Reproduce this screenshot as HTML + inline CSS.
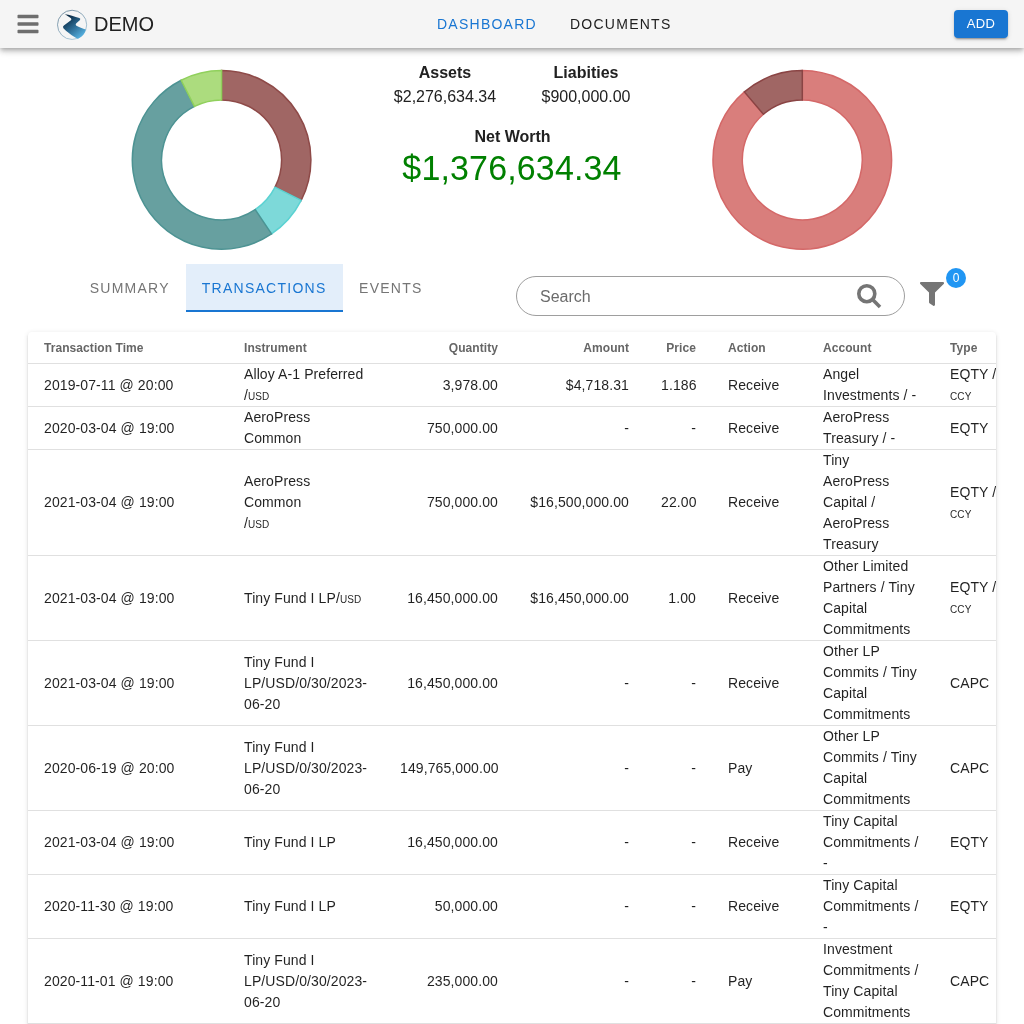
<!DOCTYPE html>
<html><head><meta charset="utf-8">
<style>
html,body{will-change:transform;margin:0;padding:0;width:1024px;height:1024px;overflow:hidden;background:#fff;font-family:"Liberation Sans",sans-serif;color:rgba(0,0,0,0.87)}
.abs{position:absolute}
#bar{position:absolute;left:0;top:0;width:1024px;height:48px;background:#f5f5f5;box-shadow:0px 2px 4px -1px rgba(0,0,0,0.2),0px 4px 5px 0px rgba(0,0,0,0.14),0px 1px 10px 0px rgba(0,0,0,0.12);z-index:5}
.nav{position:absolute;top:0;height:48px;line-height:48px;font-size:14px;letter-spacing:1.25px;white-space:nowrap}
#add{position:absolute;left:954px;top:10px;width:54px;height:28px;background:#1976d2;border-radius:4px;color:#fff;font-size:13px;letter-spacing:0.37px;text-align:center;line-height:28px;box-shadow:0px 3px 1px -2px rgba(0,0,0,0.2),0px 2px 2px 0px rgba(0,0,0,0.14),0px 1px 5px 0px rgba(0,0,0,0.12)}
.t{position:absolute;white-space:nowrap;text-align:center}
.tab{position:absolute;top:264px;height:48px;line-height:48px;font-size:14px;letter-spacing:1.25px;color:#757575;white-space:nowrap;padding:0 16px;box-sizing:border-box}
#paper{position:absolute;left:28px;top:332px;width:968px;height:1000px;background:#fff;border-radius:4px;box-shadow:0px 3px 1px -2px rgba(0,0,0,0.2),0px 2px 2px 0px rgba(0,0,0,0.14),0px 1px 5px 0px rgba(0,0,0,0.12);overflow:hidden}
table{border-collapse:collapse;table-layout:fixed;width:1068px}
td,th{padding:0 16px;border-bottom:1px solid #e0e0e0;vertical-align:middle;white-space:nowrap;font-size:14px;line-height:21px;text-align:left;letter-spacing:0.1px}
th{font-size:12px;font-weight:bold;color:#666;height:31px;line-height:16px;letter-spacing:0.07px}
.r{text-align:right}
.sc{font-variant:small-caps}
</style></head><body>
<div id="bar">
  <svg class="abs" style="left:17px;top:12px" width="22" height="24" viewBox="0 0 448 512"><path fill="#6e6e6e" d="M16 132h416c8.837 0 16-7.163 16-16V76c0-8.837-7.163-16-16-16H16C7.163 60 0 67.163 0 76v40c0 8.837 7.163 16 16 16zm0 160h416c8.837 0 16-7.163 16-16v-40c0-8.837-7.163-16-16-16H16c-8.837 0-16 7.163-16 16v40c0 8.837 7.163 16 16 16zm0 160h416c8.837 0 16-7.163 16-16v-40c0-8.837-7.163-16-16-16H16c-8.837 0-16 7.163-16 16v40c0 8.837 7.163 16 16 16z"/></svg>
  <svg class="abs" style="left:56px;top:9px" width="32" height="32" viewBox="0 0 32 32">
    <defs>
      <linearGradient id="lg" x1="0.2" y1="0.1" x2="0.85" y2="0.95"><stop offset="0" stop-color="#0a2a44"/><stop offset="0.5" stop-color="#2f6f98"/><stop offset="1" stop-color="#5ab8e8"/></linearGradient>
      <linearGradient id="lc" x1="0.2" y1="0" x2="0.8" y2="1"><stop offset="0" stop-color="#617f94"/><stop offset="1" stop-color="#a6c9dd"/></linearGradient>
    </defs>
    <circle cx="16.1" cy="15.85" r="14.6" fill="none" stroke="url(#lc)" stroke-width="0.85"/>
    <path fill="url(#lg)" d="M8.75 5.2 C13 5.7 19 7.6 23.3 9.0 Q24.9 9.7 24 10.9 L20.1 14.6 Q19.1 15.8 20.4 16.8 C23 18.3 26.5 19.6 29.9 20.4 A14.6 14.6 0 0 1 21.9 29.8 C16.5 27 10.5 22.5 7.4 19.2 Q6.3 17.7 7.9 16.4 L14.9 11.3 Q15.9 10.4 14.9 9.3 C12.5 7.5 10.5 6.2 8.75 5.2 Z"/>
  </svg>
  <div class="nav" style="left:94px;font-size:20px;letter-spacing:0;color:#212121">DEMO</div>
  <div class="nav" style="left:437px;color:#1976d2">DASHBOARD</div>
  <div class="nav" style="left:570px;color:#212121">DOCUMENTS</div>
  <div id="add">ADD</div>
</div>

<svg class="abs" style="left:0;top:0" width="1024" height="260">
<path d="M221.60 70.60A89.3 89.3 0 0 1 301.17 200.44L275.06 187.14A60.0 60.0 0 0 0 221.60 99.90Z" fill="#a06664" stroke="#8e4a48" stroke-width="1.5"/>
<path d="M301.17 200.44A89.3 89.3 0 0 1 271.54 233.93L255.15 209.64A60.0 60.0 0 0 0 275.06 187.14Z" fill="#7dd9d9" stroke="#5bd2d2" stroke-width="1.5"/>
<path d="M271.54 233.93A89.3 89.3 0 1 1 181.20 80.26L194.45 106.39A60.0 60.0 0 1 0 255.15 209.64Z" fill="#67a0a0" stroke="#4d9393" stroke-width="1.5"/>
<path d="M181.20 80.26A89.3 89.3 0 0 1 221.60 70.60L221.60 99.90A60.0 60.0 0 0 0 194.45 106.39Z" fill="#acdc7e" stroke="#90d05c" stroke-width="1.5"/>
<path d="M802.30 70.60A89.3 89.3 0 1 1 744.42 91.89L763.41 114.21A60.0 60.0 0 1 0 802.30 99.90Z" fill="#d97e7c" stroke="#d46868" stroke-width="1.5"/>
<path d="M744.42 91.89A89.3 89.3 0 0 1 802.30 70.60L802.30 99.90A60.0 60.0 0 0 0 763.41 114.21Z" fill="#a06664" stroke="#8a4444" stroke-width="1.5"/>
</svg>

<div class="t" style="left:345px;top:63px;width:200px;font-size:16px;font-weight:bold;color:#212121;line-height:20px">Assets</div>
<div class="t" style="left:345px;top:87px;width:200px;font-size:16px;color:#212121;line-height:20px">$2,276,634.34</div>
<div class="t" style="left:486px;top:63px;width:200px;font-size:16px;font-weight:bold;color:#212121;line-height:20px">Liabities</div>
<div class="t" style="left:486px;top:87px;width:200px;font-size:16px;color:#212121;line-height:20px">$900,000.00</div>
<div class="t" style="left:412.5px;top:127px;width:200px;font-size:16px;font-weight:bold;color:#212121;line-height:20px">Net Worth</div>
<div class="t" style="left:312px;top:148px;width:400px;font-size:34px;color:#008000;line-height:40px;letter-spacing:0.14px;transform:scaleY(1.05);transform-origin:50% 32px">$1,376,634.34</div>

<div class="tab" style="left:73.7px">SUMMARY</div>
<div class="tab" style="left:185.8px;width:157.3px;color:#1976d2;background:#e3eefa;box-shadow:inset 0 -2px 0 #1976d2">TRANSACTIONS</div>
<div class="tab" style="left:343.1px">EVENTS</div>

<div class="abs" style="left:516px;top:276px;width:388.5px;height:40px;box-sizing:border-box;border:1px solid #9e9e9e;border-radius:20px"></div>
<div class="abs" style="left:540px;top:287px;font-size:16px;line-height:20px;color:#6b6b6b">Search</div>
<svg class="abs" style="left:850px;top:276px" width="40" height="40" viewBox="0 0 40 40"><circle cx="16.8" cy="17.7" r="8" fill="none" stroke="#757575" stroke-width="3.6"/><line x1="22.3" y1="23.2" x2="30" y2="30.9" stroke="#757575" stroke-width="3.6"/></svg>
<svg class="abs" style="left:920px;top:282px" width="24" height="24" viewBox="0 0 512 512"><path fill="#757575" d="M487.976 0H24.028C2.71 0-8.047 25.866 7.058 40.971L192 225.941V432c0 7.831 3.821 15.17 10.237 19.662l80 55.98C298.02 518.69 320 507.493 320 487.98V225.941l184.947-184.97C520.021 25.896 509.338 0 487.976 0z"/></svg>
<div class="abs" style="left:946px;top:268px;width:20px;height:20px;border-radius:10px;background:#2196f3;color:#fff;font-size:12px;line-height:20px;text-align:center">0</div>

<div id="paper">
<table>
<colgroup><col style="width:200px"><col style="width:156px"><col style="width:130px"><col style="width:131px"><col style="width:67px"><col style="width:95px"><col style="width:127px"><col style="width:162px"></colgroup>
<tr><th>Transaction Time</th><th>Instrument</th><th class="r">Quantity</th><th class="r">Amount</th><th class="r">Price</th><th>Action</th><th>Account</th><th>Type</th></tr>
<tr style="height:43px"><td>2019-07-11 @ 20:00</td><td>Alloy A-1 Preferred<br><span class="sc">/usd</span></td><td class="r">3,978.00</td><td class="r">$4,718.31</td><td class="r">1.186</td><td>Receive</td><td>Angel<br>Investments / -</td><td>EQTY /<br><span class="sc">ccy</span></td></tr>
<tr style="height:43px"><td>2020-03-04 @ 19:00</td><td>AeroPress<br>Common</td><td class="r">750,000.00</td><td class="r">-</td><td class="r">-</td><td>Receive</td><td>AeroPress<br>Treasury / -</td><td>EQTY</td></tr>
<tr style="height:106px"><td>2021-03-04 @ 19:00</td><td>AeroPress<br>Common<br><span class="sc">/usd</span></td><td class="r">750,000.00</td><td class="r">$16,500,000.00</td><td class="r">22.00</td><td>Receive</td><td>Tiny<br>AeroPress<br>Capital /<br>AeroPress<br>Treasury</td><td>EQTY /<br><span class="sc">ccy</span></td></tr>
<tr style="height:85px"><td>2021-03-04 @ 19:00</td><td>Tiny Fund I LP<span class="sc">/usd</span></td><td class="r">16,450,000.00</td><td class="r">$16,450,000.00</td><td class="r">1.00</td><td>Receive</td><td>Other Limited<br>Partners / Tiny<br>Capital<br>Commitments</td><td>EQTY /<br><span class="sc">ccy</span></td></tr>
<tr style="height:85px"><td>2021-03-04 @ 19:00</td><td>Tiny Fund I<br>LP/USD/0/30/2023-<br>06-20</td><td class="r">16,450,000.00</td><td class="r">-</td><td class="r">-</td><td>Receive</td><td>Other LP<br>Commits / Tiny<br>Capital<br>Commitments</td><td>CAPC</td></tr>
<tr style="height:85px"><td>2020-06-19 @ 20:00</td><td>Tiny Fund I<br>LP/USD/0/30/2023-<br>06-20</td><td class="r">149,765,000.00</td><td class="r">-</td><td class="r">-</td><td>Pay</td><td>Other LP<br>Commits / Tiny<br>Capital<br>Commitments</td><td>CAPC</td></tr>
<tr style="height:64px"><td>2021-03-04 @ 19:00</td><td>Tiny Fund I LP</td><td class="r">16,450,000.00</td><td class="r">-</td><td class="r">-</td><td>Receive</td><td>Tiny Capital<br>Commitments /<br>-</td><td>EQTY</td></tr>
<tr style="height:64px"><td>2020-11-30 @ 19:00</td><td>Tiny Fund I LP</td><td class="r">50,000.00</td><td class="r">-</td><td class="r">-</td><td>Receive</td><td>Tiny Capital<br>Commitments /<br>-</td><td>EQTY</td></tr>
<tr style="height:85px"><td>2020-11-01 @ 19:00</td><td>Tiny Fund I<br>LP/USD/0/30/2023-<br>06-20</td><td class="r">235,000.00</td><td class="r">-</td><td class="r">-</td><td>Pay</td><td>Investment<br>Commitments /<br>Tiny Capital<br>Commitments</td><td>CAPC</td></tr>
</table>
</div>
</body></html>
